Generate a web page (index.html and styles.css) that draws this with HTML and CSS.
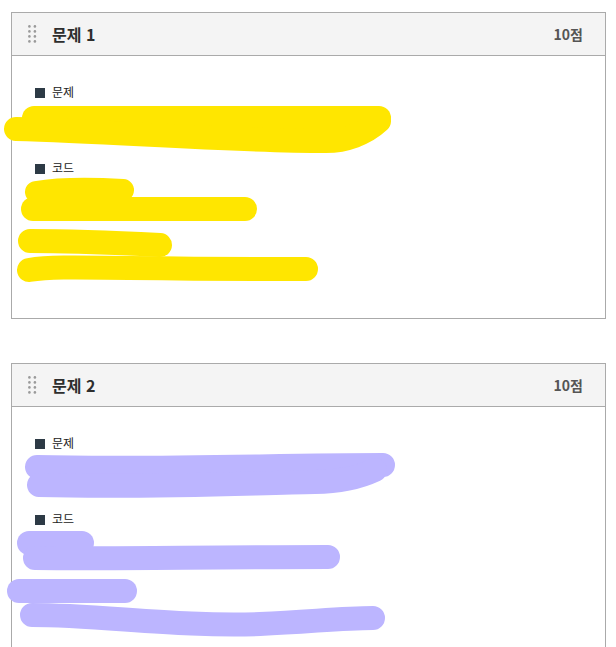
FILE: index.html
```html
<!DOCTYPE html>
<html lang="ko">
<head>
<meta charset="utf-8">
<title>문제</title>
<link rel="stylesheet" href="styles.css">
</head>
<body>
<main class="page">
  <section class="card">
    <header class="card-head">
      <span class="handle">
        <svg width="9" height="18" viewBox="0 0 9 18"><g fill="#9a9a9a"><circle cx="1.4" cy="1.4" r="1.3"/><circle cx="6.9" cy="1.4" r="1.3"/><circle cx="1.4" cy="6.4" r="1.3"/><circle cx="6.9" cy="6.4" r="1.3"/><circle cx="1.4" cy="11.4" r="1.3"/><circle cx="6.9" cy="11.4" r="1.3"/><circle cx="1.4" cy="16.4" r="1.3"/><circle cx="6.9" cy="16.4" r="1.3"/></g></svg>
      </span>
      <h2 class="card-title">문제 1</h2>
      <span class="score">10점</span>
    </header>
    <div class="card-body">
      <div class="field">
        <div class="label"><span class="sq"></span>문제</div>
        <div class="content content-q"></div>
      </div>
      <div class="field">
        <div class="label"><span class="sq"></span>코드</div>
        <div class="content content-code"></div>
      </div>
    </div>
  </section>

  <section class="card">
    <header class="card-head">
      <span class="handle">
        <svg width="9" height="18" viewBox="0 0 9 18"><g fill="#9a9a9a"><circle cx="1.4" cy="1.4" r="1.3"/><circle cx="6.9" cy="1.4" r="1.3"/><circle cx="1.4" cy="6.4" r="1.3"/><circle cx="6.9" cy="6.4" r="1.3"/><circle cx="1.4" cy="11.4" r="1.3"/><circle cx="6.9" cy="11.4" r="1.3"/><circle cx="1.4" cy="16.4" r="1.3"/><circle cx="6.9" cy="16.4" r="1.3"/></g></svg>
      </span>
      <h2 class="card-title">문제 2</h2>
      <span class="score">10점</span>
    </header>
    <div class="card-body">
      <div class="field">
        <div class="label"><span class="sq"></span>문제</div>
        <div class="content content-q"></div>
      </div>
      <div class="field">
        <div class="label"><span class="sq"></span>코드</div>
        <div class="content content-code"></div>
      </div>
    </div>
  </section>
</main>

<svg class="redact" width="616" height="647" viewBox="0 0 616 647">
  <g fill="none" stroke-linecap="round" stroke-linejoin="round" stroke-width="24">
    <g stroke="#ffe600">
      <path d="M34 118 L379 118"/>
      <path d="M16 129 C 120 132, 230 141, 326 141 C 345 141, 365 134, 379 121"/>
      <path d="M36 192 C 60 188, 90 188, 123 190" stroke-width="22"/>
      <path d="M33 209 L245 209"/>
      <path d="M30 241 C 80 241, 120 243, 160 245"/>
      <path d="M29 270 C 60 265, 100 269, 306 269"/>
    </g>
    <g stroke="#bcb5ff">
      <path d="M37 467 C 150 470, 280 465, 383 465"/>
      <path d="M39 485 C 150 488, 250 483, 315 482 C 340 482, 360 477, 375 470"/>
      <path d="M29 543 L82 543"/>
      <path d="M35 558 C 120 559, 200 557, 328 557"/>
      <path d="M19 591 L125 591"/>
      <path d="M32 615 C 100 615, 180 627, 260 624 C 310 622, 340 618, 373 618"/>
    </g>
  </g>
</svg>
</body>
</html>
```

FILE: styles.css
```css
* { box-sizing: border-box; }

html, body {
  margin: 0;
  padding: 0;
  background: #ffffff;
}

body {
  position: relative;
  width: 616px;
  height: 647px;
  overflow: hidden;
  font-family: "Noto Sans CJK KR", "Noto Sans", sans-serif;
  color: #222;
}

.page {
  padding: 12px 10px 0 11px;
  display: flex;
  flex-direction: column;
  gap: 44px;
}

.card {
  border: 1px solid #aaaaaa;
  background: #ffffff;
}

.card-head {
  height: 43px;
  display: flex;
  align-items: center;
  padding: 0 22px 0 16px;
  background: #f4f4f4;
  border-bottom: 1px solid #aaaaaa;
}

.handle {
  display: flex;
  width: 9px;
  height: 18px;
  margin-right: 15px;
}

.card-title {
  margin: 0;
  flex: 1;
  font-size: 16px;
  font-weight: 700;
  line-height: 20px;
  color: #2e2e2e;
}

.score {
  font-size: 14px;
  font-weight: 700;
  color: #555555;
  line-height: 20px;
}

.card-body {
  padding: 27px 0 0 23px;
}

.label {
  display: flex;
  align-items: center;
  height: 18px;
  font-size: 12px;
  line-height: 18px;
  color: #222;
}

.sq {
  width: 10px;
  height: 10px;
  background: #2d3a45;
  margin-right: 7px;
  margin-top: 1px;
}

.content-q { height: 58px; }
.content-code { height: 141px; }

.redact {
  position: absolute;
  left: 0;
  top: 0;
  pointer-events: none;
}
```
